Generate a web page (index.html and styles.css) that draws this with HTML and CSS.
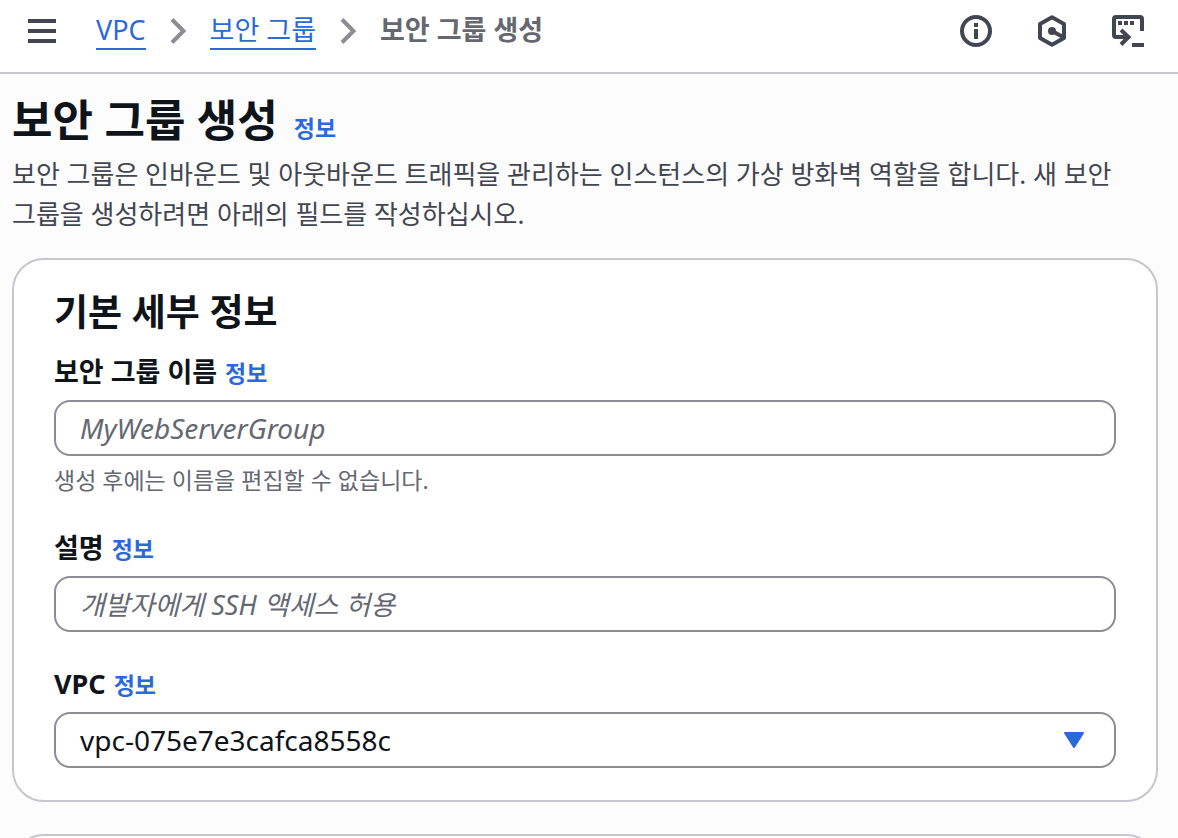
FILE: index.html
```
<!DOCTYPE html>
<html lang="ko">
<head>
    <meta charset="UTF-8">
    <meta name="viewport" content="width=device-width, initial-scale=1.0">
    <title>보안 그룹 생성 | VPC</title>
    <link rel="stylesheet" href="styles.css">
</head>
<body>
    <header class="topbar">
        <button type="button" class="icon-btn menu-btn" aria-label="메뉴">
            <svg width="28" height="24" viewBox="0 0 28 24" fill="none" stroke="currentColor" stroke-width="4">
                <path d="M0 2h28M0 12h28M0 22h28"/>
            </svg>
        </button>

        <nav class="breadcrumb" aria-label="탐색 경로">
            <a href="#">VPC</a>
            <svg class="chevron" width="16" height="28" viewBox="0 0 16 28" fill="none" stroke="currentColor" stroke-width="4">
                <path d="M2 2.500L13.500 14L2 25.500"/>
            </svg>
            <a href="#">보안 그룹</a>
            <svg class="chevron" width="16" height="28" viewBox="0 0 16 28" fill="none" stroke="currentColor" stroke-width="4">
                <path d="M2 2.500L13.500 14L2 25.500"/>
            </svg>
            <span class="breadcrumb-current">보안 그룹 생성</span>
        </nav>

        <div class="tools">
            <button type="button" class="icon-btn" aria-label="도움말">
                <svg width="32" height="32" viewBox="0 0 32 32" fill="none" stroke="currentColor" stroke-width="4">
                    <circle cx="16" cy="16" r="14"/>
                    <path d="M16 8v4M16 14v10"/>
                </svg>
            </button>
            <button type="button" class="icon-btn" aria-label="Amazon Q">
                <svg width="32" height="32" viewBox="0 0 32 32" fill="none" stroke="currentColor" stroke-width="4" stroke-linejoin="round">
                    <path d="M16 2.300L28 9v14L16 29.700L4 23V9z"/>
                    <path d="M16 16l11 6"/>
                    <circle cx="16" cy="16" r="4" fill="currentColor" stroke="none"/>
                </svg>
            </button>
            <button type="button" class="icon-btn" aria-label="CloudShell">
                <svg width="32" height="32" viewBox="0 0 32 32" fill="none" stroke="currentColor" stroke-width="4">
                    <path d="M30 16V4a2 2 0 0 0-2-2H4a2 2 0 0 0-2 2v16a2 2 0 0 0 2 2h13" />
                    <path d="M9 15l7.500 7L9 29.500"/>
                    <path d="M6 8h4M12 8h4M18 8h4M20 30h12"/>
                </svg>
            </button>
        </div>
    </header>

    <main class="content">
        <div class="page-header">
            <h1>보안 그룹 생성</h1>
            <a href="#" class="info-link">정보</a>
        </div>
        <p class="page-desc">보안 그룹은 인바운드 및 아웃바운드 트래픽을 관리하는 인스턴스의 가상 방화벽 역할을 합니다. 새 보안 그룹을 생성하려면 아래의 필드를 작성하십시오.</p>

        <form class="card">
            <h2>기본 세부 정보</h2>

            <div class="field">
                <div class="field-head">
                    <label for="group-name">보안 그룹 이름</label>
                    <a href="#" class="info-link">정보</a>
                </div>
                <input type="text" id="group-name" class="control" placeholder="MyWebServerGroup" aria-describedby="group-name-hint">
                <p class="hint" id="group-name-hint">생성 후에는 이름을 편집할 수 없습니다.</p>
            </div>

            <div class="field">
                <div class="field-head">
                    <label for="description">설명</label>
                    <a href="#" class="info-link">정보</a>
                </div>
                <input type="text" id="description" class="control control--ko" placeholder="개발자에게 SSH 액세스 허용">
            </div>

            <div class="field">
                <div class="field-head">
                    <label for="vpc">VPC</label>
                    <a href="#" class="info-link">정보</a>
                </div>
                <div class="select-wrap">
                    <select id="vpc" class="control">
                        <option>vpc-075e7e3cafca8558c</option>
                    </select>
                    <svg class="caret" width="20" height="16" viewBox="0 0 20 16" fill="currentColor" stroke="currentColor" stroke-width="2" stroke-linejoin="round">
                        <path d="M1 1h18L10 15z"/>
                    </svg>
                </div>
            </div>
        </form>

        <section class="card"></section>
    </main>
</body>
</html>
```
FILE: styles.css
```
:root {
    --link: #2b69d9;
    --text: #0f141a;
    --text-body: #424650;
    --text-muted: #656871;
    --border: #c6c6cd;
    --border-control: #8c8c94;
    --bg: #fcfcfd;
}

* {
    box-sizing: border-box;
}

body {
    margin: 0;
    background: var(--bg);
    color: var(--text);
    font-family: "Noto Sans", "Noto Sans CJK KR", sans-serif;
    font-size: 26px;
    line-height: 40px;
    word-break: keep-all;
}

a {
    color: var(--link);
    text-decoration: none;
}

h1,
h2,
p {
    margin: 0;
}

.topbar {
    display: flex;
    align-items: center;
    height: 74px;
    padding: 0 34px 10px 28px;
    background: white;
    border-bottom: 2px solid var(--border);
}

.icon-btn {
    display: flex;
    padding: 0;
    border: none;
    background: none;
    color: var(--text-body);
    cursor: pointer;
}

.menu-btn {
    margin-right: 40px;
}

.breadcrumb {
    display: flex;
    align-items: center;
    gap: 24px;
    font-size: 27px;
}

.breadcrumb a {
    height: 38px;
    line-height: 36px;
    border-bottom: 2px solid var(--link);
}

.breadcrumb-current {
    height: 38px;
    line-height: 36px;
    color: var(--text-muted);
    font-weight: 700;
}

.chevron {
    color: var(--border-control);
}

.tools {
    display: flex;
    gap: 44px;
    margin-left: auto;
}

.content {
    padding: 14px 20px 32px 12px;
}

.page-header {
    display: flex;
    align-items: baseline;
    gap: 16px;
    margin-bottom: 2px;
}

h1 {
    font-size: 44px;
    line-height: 64px;
}

.info-link {
    font-size: 23px;
    font-weight: 700;
}

.page-desc {
    color: var(--text-body);
}

.card {
    display: flex;
    flex-direction: column;
    gap: 32px;
    margin-top: 24px;
    padding: 32px 40px;
    background: white;
    border: 2px solid var(--border);
    border-radius: 32px;
}

.card + .card {
    margin-top: 32px;
}

h2 {
    margin-bottom: -12px;
    font-size: 37px;
    line-height: 40px;
}

.field-head {
    display: flex;
    align-items: baseline;
    gap: 8px;
    height: 40px;
    margin-bottom: 8px;
}

.field-head label {
    font-size: 27px;
    font-weight: 700;
}

.control {
    display: block;
    width: 100%;
    height: 56px;
    padding: 0 24px;
    border: 2px solid var(--border-control);
    border-radius: 16px;
    background: white;
    color: var(--text);
    font-family: inherit;
    font-size: 28px;
}

.control--ko {
    font-size: 27px;
}

.control::placeholder {
    color: var(--text-muted);
    font-style: italic;
    opacity: 1;
}

.control:focus {
    outline: none;
    border-color: var(--link);
}

.hint {
    margin-top: 8px;
    color: var(--text-muted);
    font-size: 23px;
    line-height: 32px;
}

.select-wrap {
    position: relative;
}

select.control {
    appearance: none;
}

.caret {
    position: absolute;
    top: 20px;
    right: 32px;
    color: var(--link);
    pointer-events: none;
}
```
